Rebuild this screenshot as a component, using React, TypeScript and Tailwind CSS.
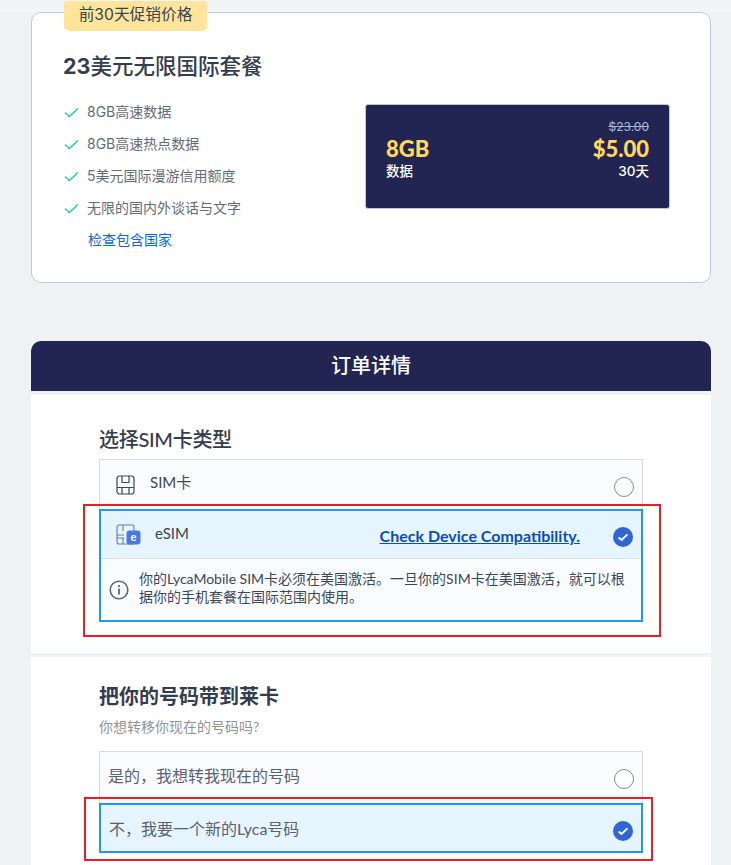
function Check() {
  return (
    <svg width="15" height="11" viewBox="0 0 15 11" fill="none" className="shrink-0">
      <path d="M1 5.5 L5.3 9.5 L14 1.5" stroke="#1fd286" strokeWidth="1.4" />
    </svg>
  );
}

function Feature({ text }: { text: string }) {
  return (
    <div className="flex h-8 items-center">
      <div className="flex w-[23px]"><Check /></div>
      <span className="text-sm text-[#646b78]">{text}</span>
    </div>
  );
}

function Radio() {
  return <div className="h-5 w-5 rounded-full border border-[#8a8a8a] bg-white" />;
}

function Checked() {
  return (
    <svg width="20" height="20" viewBox="0 0 20 20">
      <circle cx="10" cy="10" r="10" fill="#2f66d6" />
      <path d="M5.6 10.4 L8.6 13 L14.4 7.4" stroke="#fff" strokeWidth="2" fill="none" />
    </svg>
  );
}

function SimIcon() {
  return (
    <svg width="19" height="20" viewBox="0 0 19 20" fill="none" stroke="#3d4656" strokeWidth="1.2">
      <rect x="1" y="1" width="17" height="18" rx="2.5" />
      <path d="M6 1 V7.5 H13 V1 M1 12.5 H18 M6 12.5 V19 M13 12.5 V19" />
    </svg>
  );
}

function ESimIcon() {
  return (
    <svg width="25" height="21" viewBox="0 0 25 21" fill="none">
      <g stroke="#6f7c9c" strokeWidth="1.1">
        <rect x="1" y="1" width="17" height="19" rx="2" />
        <path d="M7 1 V7 M1 11 H8 M1 14 H8 M7 14 V20 M13 14 V20" />
      </g>
      <rect x="10.5" y="6.5" width="14" height="14" rx="3" fill="#4a7ae0" />
      <text x="17.5" y="17" textAnchor="middle" fontSize="11" fontWeight="700" fill="#fff" fontFamily="Lato, sans-serif">e</text>
    </svg>
  );
}

function Info() {
  return (
    <svg width="20" height="20" viewBox="0 0 20 20" fill="none" className="shrink-0">
      <circle cx="10" cy="10" r="8.8" stroke="#5f6672" strokeWidth="1.6" />
      <circle cx="10" cy="6.2" r="1.1" fill="#5f6672" />
      <rect x="9.1" y="8.6" width="1.8" height="6" fill="#5f6672" />
    </svg>
  );
}

export default function App() {
  return (
    <div
      className="relative h-[865px] overflow-hidden bg-[#eff1f3] pl-[31px] pr-[20px] pt-3"
      style={{ fontFamily: 'Inter, "Noto Sans CJK SC", sans-serif' }}
    >
      <div className="absolute left-0 right-0 top-0 h-3 bg-[#f3f4f7]" />

      {/* Plan card */}
      <section className="relative h-[271px] rounded-[10px] border border-[#c0c9dc] bg-white pl-8 pr-[40px]">
        <div className="absolute left-8 top-[-12px] flex h-[30px] w-[143px] items-center justify-center rounded-b-[5px] rounded-t-[3px] bg-[#ffe59a] pb-[2px] text-[15.7px] text-[#3a4354]">
          前30天促销价格
        </div>
        <div className="flex items-start justify-between">
          <div>
            <h2 className="-ml-px mt-[38px] text-[21.5px] leading-[30px] font-medium text-[#343d4e]">
              <span className="font-bold">23</span>美元无限国际套餐
            </h2>
            <div className="mt-[15px]">
              <Feature text="8GB高速数据" />
              <Feature text="8GB高速热点数据" />
              <Feature text="5美元国际漫游信用额度" />
              <Feature text="无限的国内外谈话与文字" />
              <div className="flex h-8 items-center pl-6 text-sm text-[#0a66d8]">检查包含国家</div>
            </div>
          </div>
          <div className="mt-[91px] flex h-[105px] w-[305px] items-start justify-between rounded-[3px] border border-[#c0c6d6] bg-[#222551] px-5 pt-[14px]">
            <div className="pt-[16px]">
              <div className="text-[22px] leading-[28px] font-black text-[#ffd85c]" style={{ fontFamily: 'Lato, sans-serif' }}>8GB</div>
              <div className="text-[13.5px] leading-[16px] font-medium text-white">数据</div>
            </div>
            <div className="text-right">
              <div className="text-xs leading-[16px] text-[#a9b9dc] line-through">$23.00</div>
              <div className="text-[22px] leading-[28px] font-black text-[#ffd85c]" style={{ fontFamily: 'Lato, sans-serif' }}>$5.00</div>
              <div className="text-[13.5px] leading-[16px] font-medium text-white">30天</div>
            </div>
          </div>
        </div>
      </section>

      {/* Order details */}
      <header className="mt-[58px] flex h-[50px] items-center justify-center rounded-t-[10px] bg-[#222551] text-xl font-medium text-white">
        订单详情
      </header>

      <div style={{ fontFamily: 'Lato, "Noto Sans CJK SC", sans-serif' }}>
        <section className="mt-1 h-[258px] bg-white px-[68px] pt-[32px]">
          <h3 className="text-xl leading-6 font-medium tracking-[-0.3px] text-[#343d4e]">选择SIM卡类型</h3>
          <div className="mt-2 flex h-[50px] items-center border border-b-0 border-[#d9d9d9] bg-[#fafbff] pl-4 pr-[8px]">
            <SimIcon />
            <span className="mb-[5px] ml-[15px] text-[15px] text-[#3d4656]">SIM卡</span>
            <div className="ml-auto mt-[4px] flex"><Radio /></div>
          </div>
          <div className="border-2 border-[#2196f3] bg-[#f9fcff]">
            <div className="flex h-[48px] items-center border-b border-[#dcdff0] bg-[#e6f4fe] pl-[15px] pr-[8px]">
              <ESimIcon />
              <span className="mb-[2px] ml-[14px] text-[15px] text-[#3d4656]">eSIM</span>
              <a className="ml-auto mr-[33px] mt-[2px] text-[16px] font-bold text-[#0b4eb3] underline">Check Device Compatibility.</a>
              <div className="mt-[5px] flex"><Checked /></div>
            </div>
            <div className="flex h-[61px] items-center pl-[8px] pr-2">
              <Info />
              <p className="mb-1 ml-[10px] text-sm leading-[18px] text-[#3d4656]">
                你的LycaMobile SIM卡必须在美国激活。一旦你的SIM卡在美国激活，就可以根据你的手机套餐在国际范围内使用。
              </p>
            </div>
          </div>
        </section>

        <section className="mt-1 h-[208px] bg-white px-[68px] pt-[27px]">
          <h3 className="text-xl leading-6 font-bold text-[#343d4e]">把你的号码带到莱卡</h3>
          <p className="mt-[9px] text-sm leading-5 text-[#8f9296]">你想转移你现在的号码吗?</p>
          <div className="mt-[14px] flex h-[52px] items-center border border-b-0 border-[#d9d9d9] bg-[#fafbff] pl-2 pr-[8px] text-base text-[#5a6272]">
            <span className="mb-[4px]">是的，我想转我现在的号码</span>
            <div className="ml-auto mt-[2px] flex"><Radio /></div>
          </div>
          <div className="flex h-[50px] items-center border-2 border-[#2196f3] bg-[#e6f4fe] pl-2 pr-[8px] text-base text-[#5a6272]">
            <span className="mt-[2px]">不，我要一个新的Lyca号码</span>
            <div className="ml-auto mt-[6px] flex"><Checked /></div>
          </div>
        </section>
      </div>

      {/* Red annotation rectangles */}
      <div className="pointer-events-none absolute left-[83px] top-[504px] h-[133px] w-[578px] border-2 border-[#ed1c24]" />
      <div className="pointer-events-none absolute left-[84px] top-[797px] h-[64px] w-[569px] border-2 border-[#ed1c24]" />
    </div>
  );
}
